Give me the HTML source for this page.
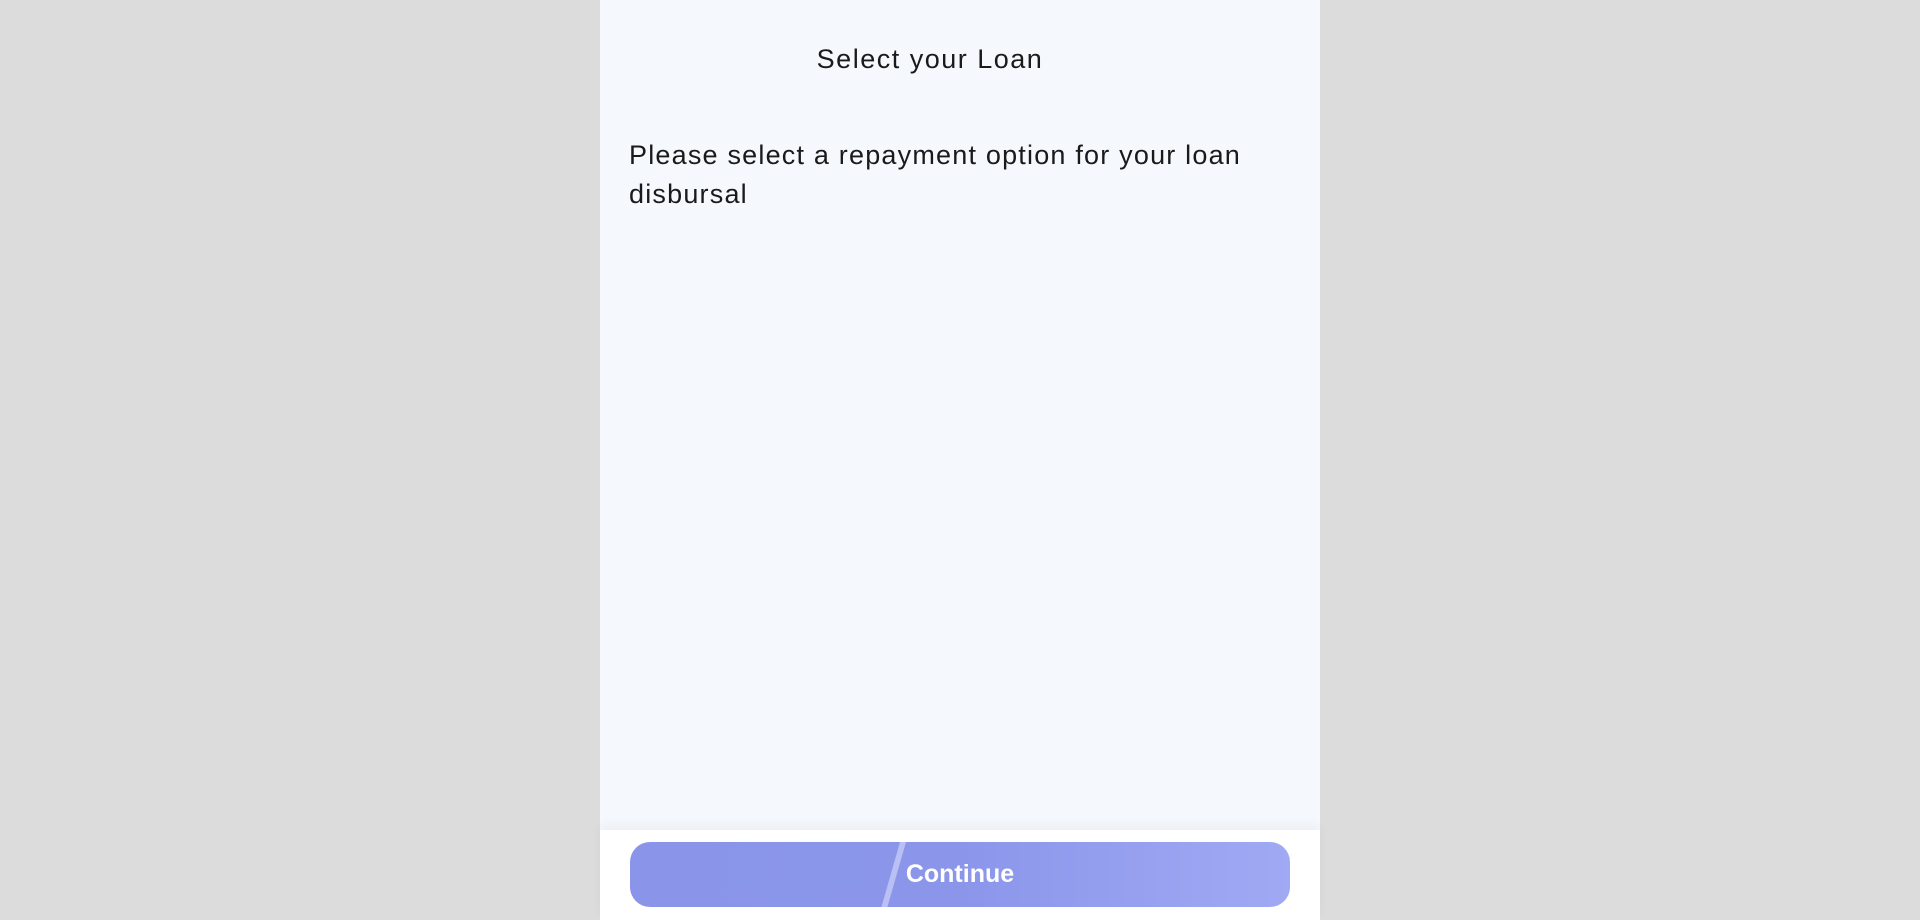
<!DOCTYPE html>
<html><head><meta charset="utf-8"><style>
html,body{margin:0;padding:0;width:1920px;height:920px;background:#dcdcdc;overflow:hidden;font-family:"Liberation Sans",sans-serif;}
.panel{position:absolute;left:600px;top:0;width:720px;height:920px;background:#f5f8fd;}
.title{position:absolute;left:0;width:660px;top:44px;text-align:center;font-size:27px;letter-spacing:1.5px;color:#1a1a1a;}
.p{position:absolute;left:29px;top:136px;width:680px;font-size:27px;line-height:39px;letter-spacing:1.2px;color:#1a1a1a;}
.foot{position:absolute;left:0;top:830px;width:720px;height:90px;background:#fff;box-shadow:0 -6px 10px rgba(0,0,0,0.04);}
.btn{position:absolute;left:30px;top:12px;width:660px;height:65px;border-radius:20px;background:linear-gradient(90deg,#8a95ea 0%,#8b96eb 50%,#a0a9f3 100%);color:#fff;font-weight:bold;font-size:25px;text-align:center;line-height:65px;overflow:hidden;}
.streak{position:absolute;left:260px;top:-5px;width:6px;height:80px;background:rgba(255,255,255,0.4);transform:skewX(-16deg);}
</style></head><body>
<div class="panel">
<div class="title">Select your Loan</div>
<div class="p">Please select a repayment option for your loan disbursal</div>
<div class="foot"><div class="btn"><div class="streak"></div>Continue</div></div>
</div>
</body></html>
